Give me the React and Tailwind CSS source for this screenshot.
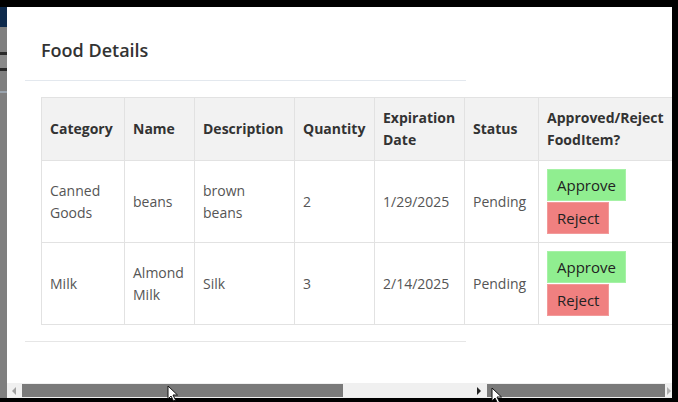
import React from "react";

const foods = [
  { category: "Canned Goods", name: "beans", description: "brown beans", quantity: 2, expires: "1/29/2025", status: "Pending" },
  { category: "Milk", name: "Almond Milk", description: "Silk", quantity: 3, expires: "2/14/2025", status: "Pending" },
];

const cols = [
  { label: "Category", w: "w-[83px]" },
  { label: "Name", w: "w-[70px]" },
  { label: "Description", w: "w-[100px]" },
  { label: "Quantity", w: "w-[80px]" },
  { label: "Expiration Date", w: "w-[90px]" },
  { label: "Status", w: "w-[74px]" },
  { label: "Approved/Reject FoodItem?", w: "w-[140px]" },
];

function Cursor({ className }) {
  return (
    <svg className={className} width="12" height="17" viewBox="0 0 12 17">
      <path d="M1 1 L1 14 L4 11 L6.5 16 L8.5 15 L6 10 L10.5 10 Z" fill="#fff" stroke="#111" strokeWidth="1" />
    </svg>
  );
}

export default function App() {
  return (
    <div
      className="w-[678px] h-[402px] bg-black overflow-hidden flex flex-col relative"
      style={{ fontFamily: '"Open Sans", "Noto Sans", sans-serif' }}
    >
      <div className="h-[7px] shrink-0" />
      <div className="flex flex-1 min-h-0">
        {/* page behind the modal */}
        <div className="w-[7px] flex flex-col bg-[#7f7f7f]">
          <div className="h-[20px] bg-[#0e2a4c]" />
          <div className="h-[25px]" />
          <div className="h-[3px] bg-[#2a2a2a]" />
          <div className="h-[13px] bg-[#8a8a8a]" />
          <div className="h-[3px] bg-[#2a2a2a]" />
          <div className="h-[20px]" />
          <div className="h-[2px] bg-[#9aa4ae]" />
          <div className="flex-1" />
        </div>

        <div className="flex-1 bg-white flex flex-col overflow-hidden">
          <div className="flex-1 min-h-0 overflow-hidden">
            <div className="ml-[18px] mt-[14px] w-[441px]">
              <div className="p-4 border-b border-[#e3e8ee]">
                <h2 className="text-[18px] leading-[27px] font-semibold text-[#333]">Food Details</h2>
              </div>
              <div className="p-4">
                <table className="w-[637px] border-collapse table-fixed text-[14px] leading-[22px]">
                  <thead>
                    <tr className="bg-[#f2f2f2]">
                      {cols.map((c) => (
                        <th
                          key={c.label}
                          className={`${c.w} border border-[#e2e2e2] px-2 py-[9px] text-left align-middle font-bold text-[#333]`}
                        >
                          {c.label}
                        </th>
                      ))}
                    </tr>
                  </thead>
                  <tbody className="text-[#555]">
                    {foods.map((f) => (
                      <tr key={f.name}>
                        <td className="border border-[#e2e2e2] p-2 align-middle">{f.category}</td>
                        <td className="border border-[#e2e2e2] p-2 align-middle">{f.name}</td>
                        <td className="border border-[#e2e2e2] p-2 align-middle">{f.description}</td>
                        <td className="border border-[#e2e2e2] p-2 align-middle">{f.quantity}</td>
                        <td className="border border-[#e2e2e2] p-2 align-middle">{f.expires}</td>
                        <td className="border border-[#e2e2e2] p-2 align-middle">{f.status}</td>
                        <td className="border border-[#e2e2e2] p-2 align-middle">
                          <div className="flex flex-col items-start gap-px">
                            <button className="bg-[#90ee90] border border-[#a6f2a6] text-[#222] px-[9px] py-[4px] text-[15px]">
                              Approve
                            </button>
                            <button className="bg-[#f08080] border border-[#f29a9a] text-[#222] px-[9px] py-[4px] text-[15px]">
                              Reject
                            </button>
                          </div>
                        </td>
                      </tr>
                    ))}
                  </tbody>
                </table>
              </div>
              <div className="border-t border-[#e6e6e6] h-[40px]" />
            </div>
          </div>

          {/* horizontal scrollbar */}
          <div className="h-[15px] shrink-0 bg-[#f0f0f0] flex items-center">
            <div className="w-[13px] flex justify-center">
              <span className="w-0 h-0 border-y-[4px] border-y-transparent border-r-[4px] border-r-[#a0a0a0]" />
            </div>
            <div className="ml-[2px] w-[321px] h-[13px] bg-[#7a7a7a]" />
            <div className="w-[131px]" />
            <div className="w-[10px] flex justify-center">
              <span className="w-0 h-0 border-y-[4px] border-y-transparent border-l-[4px] border-l-[#222]" />
            </div>
            <div className="ml-[3px] w-[178px] h-[13px] bg-[#7a7a7a]" />
            <div className="flex-1 flex justify-center">
              <span className="w-0 h-0 border-y-[4px] border-y-transparent border-l-[4px] border-l-[#b0b0b0]" />
            </div>
          </div>
        </div>

        <div className="w-[6px]" />
      </div>
      <div className="h-[4px] shrink-0" />

      <Cursor className="absolute left-[167px] top-[385px]" />
      <Cursor className="absolute left-[491px] top-[387px]" />
    </div>
  );
}
